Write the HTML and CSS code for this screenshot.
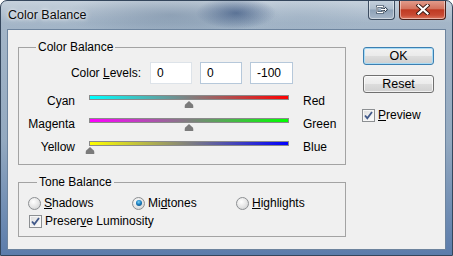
FILE: index.html
```html
<!DOCTYPE html>
<html>
<head>
<meta charset="utf-8">
<link rel="stylesheet" href="styles.css">
</head>
<body>
<div class="window">
  <div class="titlebar">
    <span class="title">Color Balance</span>
    <div class="tbuttons">
      <div class="tbtn tbtn-min">
        <svg width="12" height="9" viewBox="0 0 12 9">
          <path d="M1 1.5h6v6H1z" fill="none" stroke="#2a3a4c" stroke-width="2.2"/>
          <path d="M1 1.5h6v6H1z" fill="none" stroke="#fff" stroke-width="1"/>
          <path d="M5 4.5h5M8.5 2.5l2 2-2 2" fill="none" stroke="#2a3a4c" stroke-width="2.2"/>
          <path d="M5 4.5h5M8.5 2.5l2 2-2 2" fill="none" stroke="#fff" stroke-width="1"/>
        </svg>
      </div>
      <div class="tbtn tbtn-close">
        <svg width="14" height="11" viewBox="0 0 14 11">
          <path d="M2.5 1.5l9 8M11.5 1.5l-9 8" stroke="#3a1a14" stroke-width="4" stroke-linecap="square"/>
          <path d="M2.5 1.5l9 8M11.5 1.5l-9 8" stroke="#fff" stroke-width="2.2" stroke-linecap="square"/>
        </svg>
      </div>
    </div>
  </div>
  <div class="client">
    <div class="leftcol">
      <div class="group group-color">
        <span class="legend">Color Balance</span>
        <div class="levels">
          <span class="levels-label">Color <u>L</u>evels:</span>
          <div class="input input-a">0</div>
          <div class="input input-b">0</div>
          <div class="input input-c">-100</div>
        </div>
        <div class="sliders">
          <span class="lbl-l">Cyan</span>
          <div class="track track-cr"><span class="thumb" style="left:50%"><svg width="9" height="7" viewBox="0 0 9 7"><path d="M4.5 0L8 3.3Q9 4.3 9 5.3V7H0V5.3Q0 4.3 1 3.3Z" fill="#7b7b7b"/></svg></span></div>
          <span class="lbl-r">Red</span>
          <span class="lbl-l">Magenta</span>
          <div class="track track-mg"><span class="thumb" style="left:50%"><svg width="9" height="7" viewBox="0 0 9 7"><path d="M4.5 0L8 3.3Q9 4.3 9 5.3V7H0V5.3Q0 4.3 1 3.3Z" fill="#7b7b7b"/></svg></span></div>
          <span class="lbl-r">Green</span>
          <span class="lbl-l">Yellow</span>
          <div class="track track-yb"><span class="thumb" style="left:0%"><svg width="9" height="7" viewBox="0 0 9 7"><path d="M4.5 0L8 3.3Q9 4.3 9 5.3V7H0V5.3Q0 4.3 1 3.3Z" fill="#7b7b7b"/></svg></span></div>
          <span class="lbl-r">Blue</span>
        </div>
      </div>
      <div class="group group-tone">
        <span class="legend">Tone Balance</span>
        <div class="radios">
          <label class="opt"><span class="radio"></span><span><u>S</u>hadows</span></label>
          <label class="opt"><span class="radio checked"></span><span>Mi<u>d</u>tones</span></label>
          <label class="opt"><span class="radio"></span><span><u>H</u>ighlights</span></label>
        </div>
        <label class="opt opt-preserve"><span class="check"><svg width="11" height="11" viewBox="0 0 11 11"><path d="M2 5.5l2.3 2.7L9 2" fill="none" stroke="#41598a" stroke-width="1.8"/></svg></span><span>Preser<u>v</u>e Luminosity</span></label>
      </div>
    </div>
    <div class="rightcol">
      <div class="btn btn-default">OK</div>
      <div class="btn">Reset</div>
      <label class="opt opt-preview"><span class="check"><svg width="11" height="11" viewBox="0 0 11 11"><path d="M2 5.5l2.3 2.7L9 2" fill="none" stroke="#41598a" stroke-width="1.8"/></svg></span><span><u>P</u>review</span></label>
    </div>
  </div>
</div>
</body>
</html>
```
FILE: styles.css
```css
* { box-sizing: border-box; }
html, body { margin: 0; padding: 0; }
body {
  width: 453px;
  height: 256px;
  overflow: hidden;
  font-family: "Liberation Sans", Arial, sans-serif;
  font-size: 12px;
  color: #000;
  background: #ffffff;
}
.window {
  width: 453px;
  height: 256px;
  border: 1px solid #34465c;
  border-radius: 7px 7px 0 0;
  display: flex;
  flex-direction: column;
  background:
    radial-gradient(ellipse 40px 16px at 235px 12px, rgba(30,60,110,0.55), rgba(30,60,110,0)),
    radial-gradient(ellipse 110px 22px at 170px 14px, rgba(80,105,135,0.35), rgba(80,105,135,0)),
    radial-gradient(ellipse 70px 20px at 300px 16px, rgba(150,170,190,0.35), rgba(150,170,190,0)),
    linear-gradient(to bottom, rgba(255,255,255,0.35), rgba(255,255,255,0) 22px),
    linear-gradient(to bottom, #a7b8c9 0%, #93a9c0 55%, #5b7cab 100%);
  overflow: hidden;
}
.titlebar {
  height: 28px;
  display: flex;
  align-items: flex-start;
  padding-left: 7px;
  padding-right: 6px;
}
.title {
  margin-top: 7px;
  line-height: 15px;
  font-size: 12.5px;
  color: #0c0c0c;
  text-shadow: 0 0 6px rgba(255,255,255,0.9), 0 0 3px rgba(255,255,255,0.8);
}
.tbuttons {
  margin-left: auto;
  display: flex;
  gap: 4px;
  margin-top: -1px;
}
.tbtn {
  height: 20px;
  border: 1px solid #3c4c60;
  border-top: none;
  border-radius: 0 0 4px 4px;
  display: flex;
  align-items: center;
  justify-content: center;
  box-shadow: inset 0 0 0 1px rgba(255,255,255,0.45);
}
.tbtn-min {
  width: 27px;
  background: linear-gradient(to bottom, #c6d2de 0%, #aebdcc 48%, #8ea2b8 52%, #a6b6c8 100%);
}
.tbtn-close {
  width: 47px;
  background: linear-gradient(to bottom, #e3a090 0%, #d3735e 45%, #bf3a22 52%, #c84a33 80%, #dc7a62 100%);
  border-color: #4a1f18;
}
.client {
  margin: 0 6px 0 6px;
  height: 221px;
  background: #f0f0f0;
  border: 1px solid #6d849e;
  display: flex;
  padding: 17px 10px 0 10px;
  gap: 17px;
}
.leftcol {
  width: 328px;
  display: flex;
  flex-direction: column;
  gap: 17px;
}
.group {
  position: relative;
  border: 1px solid #a3a3a3;
}
.group-color { height: 118px; padding: 14px 0 0 0; }
.group-tone { height: 55px; padding: 12px 0 0 9px; }
.legend {
  position: absolute;
  top: -8px;
  left: 17px;
  padding: 0 2px;
  line-height: 14px;
  background: #f0f0f0;
}
.group-tone .legend { left: 18px; }
.levels {
  display: flex;
  align-items: center;
  height: 22px;
  gap: 8px;
}
.levels-label {
  width: 122px;
  text-align: right;
  margin-right: 1px;
}
.input {
  width: 42px;
  height: 22px;
  background: #fff;
  border: 1px solid #b6c8da;
  padding-left: 6px;
  line-height: 20px;
}
.input-a { border-color: #dde3e9; }
.input-c { width: 43px; }
.sliders {
  margin-top: 9px;
  display: grid;
  grid-template-columns: 56px 200px auto;
  grid-auto-rows: 23px;
  column-gap: 14px;
  align-items: start;
}
.lbl-l { text-align: right; line-height: 14px; margin-top: 1px; }
.lbl-r { line-height: 14px; margin-top: 1px; }
.track {
  position: relative;
  height: 5px;
  margin-top: 2px;
  border: 1px solid #8a8a8a;
}
.track-cr { background: linear-gradient(to right, #00ffff, #ff0000); }
.track-mg { background: linear-gradient(to right, #ff00ff, #00ff00); }
.track-yb { background: linear-gradient(to right, #ffff00, #0000ff); }
.thumb {
  position: absolute;
  top: 5px;
  width: 9px;
  height: 7px;
  transform: translateX(-50%);
  display: block;
}
.thumb svg { display: block; }
.radios {
  display: grid;
  grid-template-columns: 104px 104px 104px;
  height: 16px;
  align-items: center;
}
.opt {
  display: flex;
  align-items: center;
  gap: 3px;
  line-height: 14px;
}
.opt-preserve { margin-top: 3px; margin-left: 1px; }
.radio {
  width: 13px;
  height: 13px;
  border-radius: 50%;
  border: 1px solid #8c8f92;
  background: radial-gradient(circle at 40% 35%, #ffffff 0%, #e9e9e9 45%, #c9cbcd 100%);
  position: relative;
  flex: none;
}
.radio.checked::after {
  content: "";
  position: absolute;
  left: 2.5px;
  top: 2.5px;
  width: 6px;
  height: 6px;
  border-radius: 50%;
  background: radial-gradient(circle at 45% 35%, #7fd3f7 0%, #1a7fc1 45%, #0b3e6a 100%);
}
.check {
  width: 13px;
  height: 13px;
  border: 1px solid #8c8f92;
  background: linear-gradient(135deg, #dcdcdc 0%, #ffffff 100%);
  box-shadow: inset 0 0 0 1px #f6f6f6;
  display: flex;
  align-items: center;
  justify-content: center;
  flex: none;
}
.check svg { display: block; }
.rightcol {
  width: 71px;
  display: flex;
  flex-direction: column;
}
.btn {
  height: 18px;
  border: 1px solid #707070;
  border-radius: 3px;
  background: linear-gradient(to bottom, #f3f3f3 0%, #ebebeb 48%, #dcdcdc 52%, #d0d0d0 100%);
  box-shadow: inset 0 0 0 1px rgba(255,255,255,0.7);
  text-align: center;
  line-height: 16px;
  font-size: 12.5px;
}
.btn + .btn { margin-top: 10px; }
.btn-default {
  border-color: #3c7fb1;
  box-shadow: inset 0 0 0 1px #a8dbf5;
  background: linear-gradient(to bottom, #eaf6fd 0%, #d9f0fc 48%, #bee6fd 52%, #a7d9f5 100%);
  background: linear-gradient(to bottom, #f2f2f2 0%, #ebebeb 48%, #dddddd 52%, #cfcfcf 100%);
}
.opt-preview { margin-top: 15px; margin-left: -1px; }
```
